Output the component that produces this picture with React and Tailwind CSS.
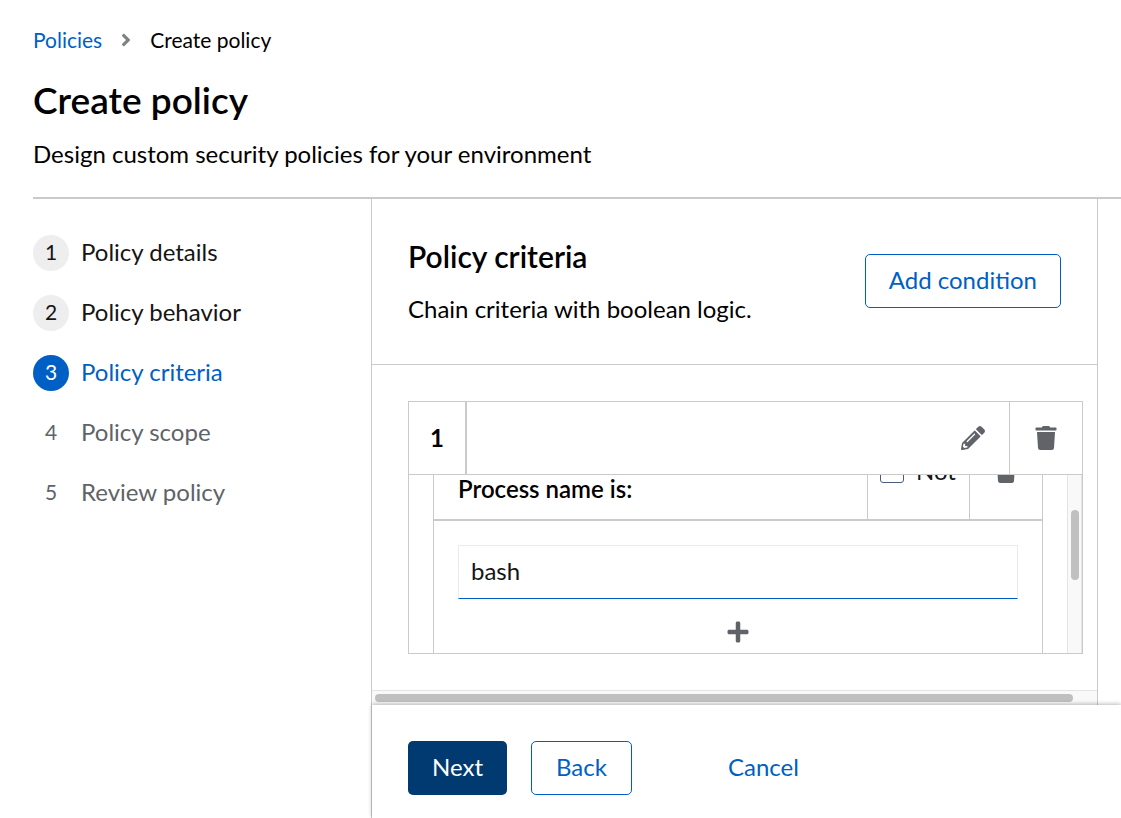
import { FaAngleRight, FaPencilAlt, FaPlus, FaTrash } from "react-icons/fa";

const steps = [
  { name: "Policy details", state: "visited" },
  { name: "Policy behavior", state: "visited" },
  { name: "Policy criteria", state: "current" },
  { name: "Policy scope", state: "upcoming" },
  { name: "Review policy", state: "upcoming" },
];

const numberStyles = {
  visited: "bg-[#eeeeee] text-[#151515]",
  current: "bg-[#005fc5] text-white",
  upcoming: "text-[#606368]",
};

const labelStyles = {
  visited: "text-[#151515]",
  current: "text-[#005fc5]",
  upcoming: "text-[#606368]",
};

function PageHeader() {
  return (
    <header className="ml-[33px] border-b-2 border-[#cacaca] pt-6 pb-6">
      <nav aria-label="Breadcrumb">
        <ol className="flex items-center text-[21px] leading-8">
          <li>
            <a href="#policies" className="text-[#005fc5]">Policies</a>
          </li>
          <li className="flex items-center">
            <FaAngleRight aria-hidden="true" className="mx-[14px] size-5 text-[#7f8285]" />
            <span aria-current="page">Create policy</span>
          </li>
        </ol>
      </nav>
      <h1 className="mt-[22px] text-[37px] leading-[44px] font-semibold">Create policy</h1>
      <p className="mt-[14px] pb-px text-2xl leading-9">Design custom security policies for your environment</p>
    </header>
  );
}

function StepNav() {
  return (
    <nav aria-label="Wizard steps" className="w-[371px] shrink-0 pt-9 pl-[33px]">
      <ol className="flex flex-col gap-6">
        {steps.map((step, i) => (
          <li key={step.name}>
            <button type="button" className="flex h-9 items-center gap-3 text-2xl">
              <span className={`flex size-9 items-center justify-center rounded-full pb-[2px] text-[21px] ${numberStyles[step.state]}`}>
                {i + 1}
              </span>
              <span className={`pb-[2px] ${labelStyles[step.state]}`}>{step.name}</span>
            </button>
          </li>
        ))}
      </ol>
    </nav>
  );
}

function Criterion() {
  return (
    <div className="-mt-[52px] mr-6 ml-6 min-w-0 flex-1 border-x border-[#cacaca]">
      <div className="flex h-[98px] border-b-2 border-[#cacaca]">
        <div className="flex flex-1 items-center pt-9 pl-6 text-2xl leading-7 font-semibold">Process name is:</div>
        <label className="flex w-[102px] items-center gap-3 border-l border-[#cacaca] pl-3 text-2xl text-[#151515]">
          <input type="checkbox" className="size-6 appearance-none rounded-[3px] border border-[#4d5b7c]" />
          Not
        </label>
        <button type="button" aria-label="Delete criterion" className="flex w-[73px] items-center justify-center border-l border-[#cacaca] text-[#606368]">
          <FaTrash className="size-6" />
        </button>
      </div>
      <div className="flex flex-col items-center px-6 pt-6">
        <input
          type="text"
          aria-label="Process name"
          defaultValue="bash"
          className="h-[54px] w-full border border-x-[#ebebeb] border-t-[#ebebeb] border-b-[#005fc5] px-3 pb-1 text-2xl text-[#151515] outline-none"
        />
        <button type="button" aria-label="Add value" className="flex h-[66px] items-center px-6 text-[#606368]">
          <FaPlus className="size-6" />
        </button>
      </div>
    </div>
  );
}

function ConditionCard() {
  return (
    <section className="mr-[14px] ml-9 border border-[#cacaca]">
      <div className="flex h-[73px] border-b border-[#cacaca]">
        <div className="flex w-[58px] items-center justify-center border-r-2 border-[#cacaca] text-2xl font-bold">1</div>
        <div className="flex flex-1 items-center justify-end pr-6">
          <button type="button" aria-label="Edit condition" className="text-[#606368]">
            <FaPencilAlt className="size-6" />
          </button>
        </div>
        <button type="button" aria-label="Delete condition" className="flex w-[73px] items-center justify-center border-l border-[#cacaca] text-[#606368]">
          <FaTrash className="size-6" />
        </button>
      </div>
      <div className="flex h-[178px] overflow-hidden">
        <Criterion />
        <div className="flex w-[15px] shrink-0 justify-center border-x border-[#e4e4e4] bg-[#f9f9f9] pt-[35px]">
          <div className="h-[70px] w-2 rounded-full bg-[#c0c0c0]" />
        </div>
      </div>
    </section>
  );
}

function CriteriaPanel() {
  return (
    <div className="mr-[23px] flex flex-1 flex-col border-r border-[#cacaca]">
      <div className="flex items-center justify-between border-b border-[#cacaca] pt-[34px] pr-9 pb-9 pl-9">
        <div>
          <h2 className="pt-px text-3xl leading-[45px] font-semibold">Policy criteria</h2>
          <p className="mt-3 pb-px text-2xl leading-9">Chain criteria with boolean logic.</p>
        </div>
        <button type="button" className="h-[54px] rounded-[5px] border border-[#005fc5] px-[23px] pb-[2px] text-2xl text-[#005fc5]">
          Add condition
        </button>
      </div>
      <div className="flex-1 py-9">
        <ConditionCard />
      </div>
      <div className="border-t border-[#e4e4e4] bg-[#f9f9f9] pt-[3px] pr-6 pb-[3px] pl-[3px]">
        <div className="h-2 rounded-full bg-[#c0c0c0]" />
      </div>
    </div>
  );
}

export default function App() {
  return (
    <div className="flex min-h-screen flex-col overflow-hidden bg-white font-['Lato','Liberation_Sans',sans-serif] text-black">
      <PageHeader />
      <div className="flex flex-1">
        <StepNav />
        <main className="flex min-w-0 flex-1 flex-col border-l border-[#cacaca]">
          <CriteriaPanel />
          <footer className="relative flex h-[113px] items-start pt-9 pl-9 text-2xl shadow-[0_-1px_4px_rgba(0,0,0,0.28)]">
            <button type="button" className="h-[54px] rounded-[5px] bg-[#003a70] px-6 pb-[2px] text-white">Next</button>
            <button type="button" className="ml-6 h-[54px] rounded-[5px] border border-[#005fc5] px-6 pb-[2px] text-[#005fc5]">Back</button>
            <button type="button" className="ml-[72px] h-[54px] px-6 pb-[2px] text-[#005fc5]">Cancel</button>
          </footer>
        </main>
      </div>
    </div>
  );
}
